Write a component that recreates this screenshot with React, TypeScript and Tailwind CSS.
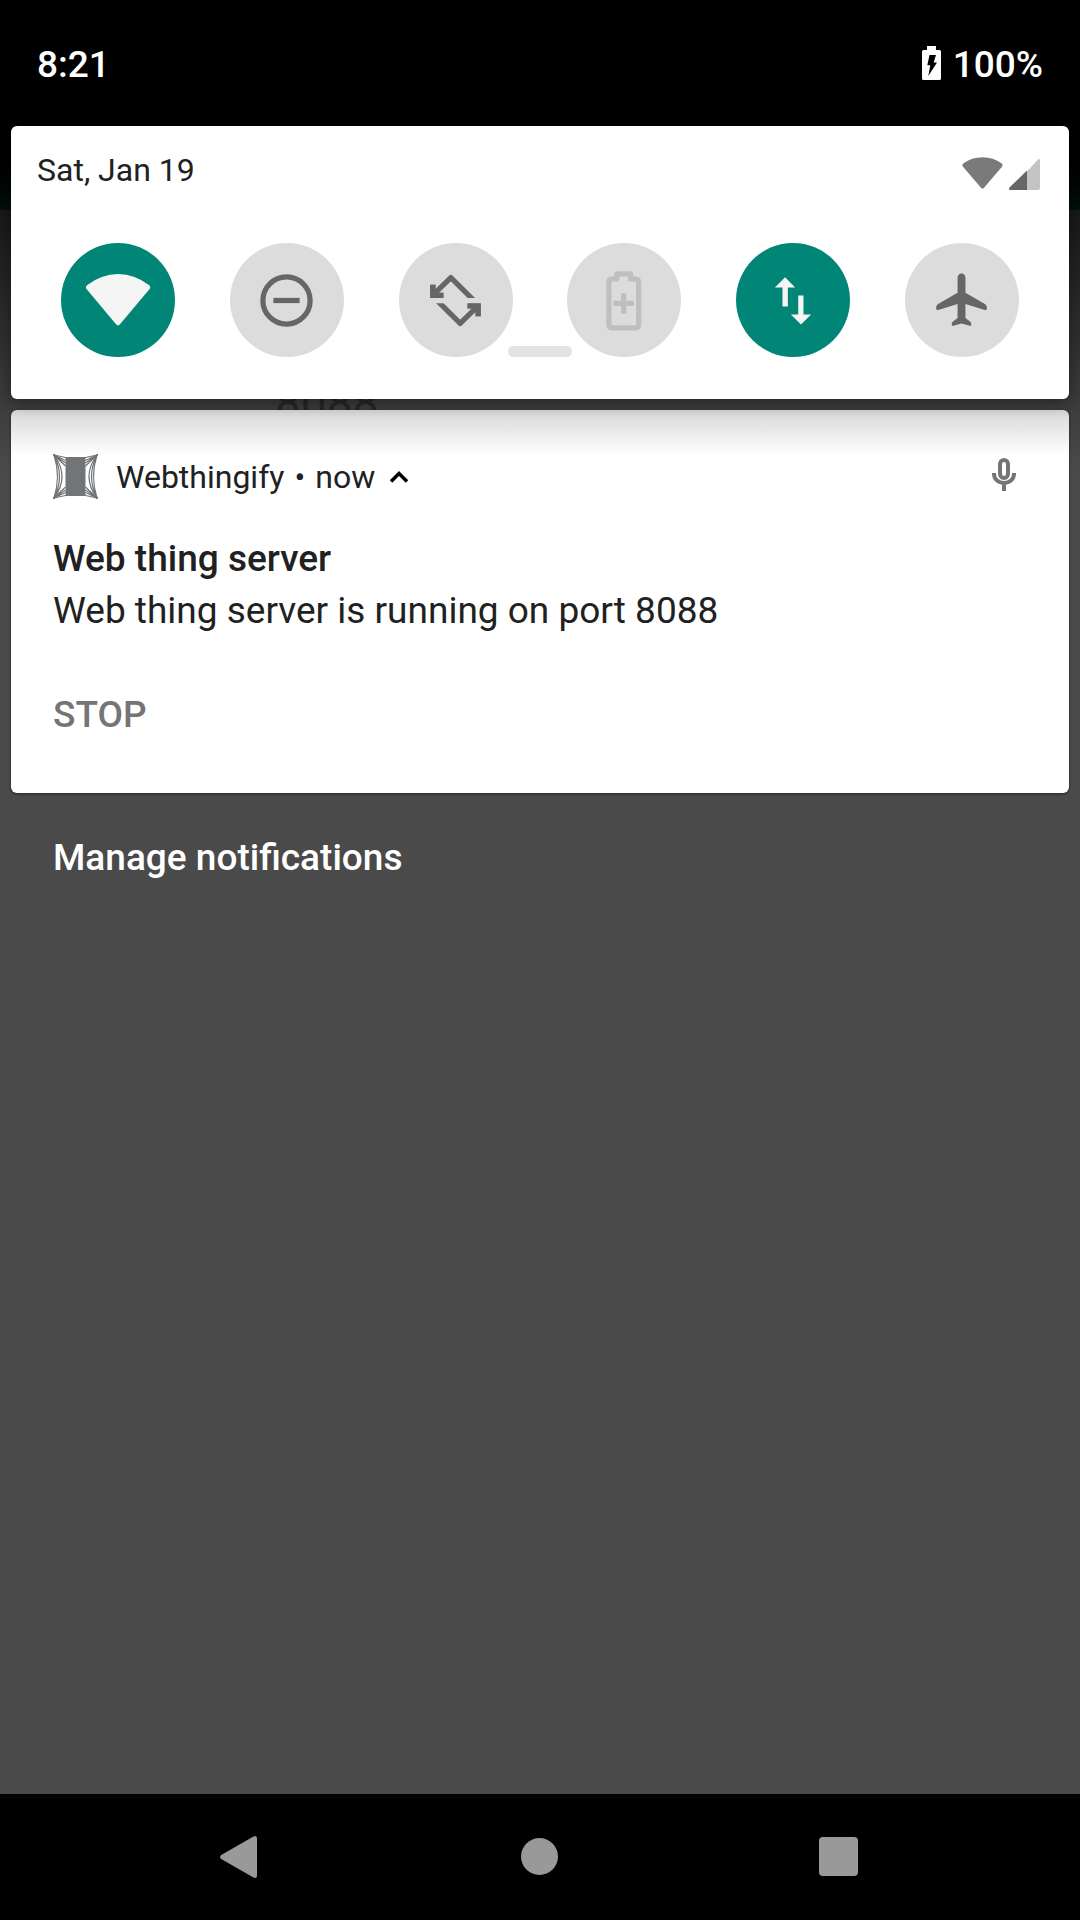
import type { ReactNode } from 'react';

const WIFI_PATH =
  'M25.5 46 Q24 43.7 26.3 42 A49 49 0 0 1 87.9 42 Q90.2 43.7 88.6 46 L59 81.3 Q57 83.6 55 81.3 Z';

const Wifi = () => (
  <svg viewBox="0 0 114 114" className="size-full fill-[#f5f5f5]" aria-hidden="true">
    <path d={WIFI_PATH} />
  </svg>
);

const DoNotDisturb = () => (
  <svg viewBox="0 0 24 24" className="size-[63px] fill-none stroke-[#666666] stroke-2" aria-hidden="true">
    <circle cx="12" cy="12" r="9" />
    <path d="M7 12h10" />
  </svg>
);

const RotateHalf = () => (
  <g clipPath="url(#upper-half)">
    <path d="M3.35 6V10H7.4" strokeWidth="2" />
    <path d="M3.6 9.8 10.22 3.25 19 12" strokeWidth="2" strokeLinejoin="round" />
    <path d="M2.400 11V6H4.400V7.600L5.800 9H7.400V11z" className="fill-[#666666]" stroke="none" />
  </g>
);

const AutoRotate = () => (
  <svg viewBox="0 0 24 24" className="size-[63px] fill-none stroke-[#666666]" aria-hidden="true">
    <clipPath id="upper-half">
      <rect x="0" y="0" width="24" height="11" />
    </clipPath>
    <RotateHalf />
    <g transform="rotate(180 12 12)">
      <RotateHalf />
    </g>
  </svg>
);

const BatterySaver = () => (
  <svg viewBox="0 0 24 24" className="size-[63px] fill-none stroke-[#bfbfbf] stroke-2" aria-hidden="true">
    <path
      d="M9.1 1.900h5.200v1.900h1.700q1.400 0 1.400 1.400v15.800q0 1.400-1.400 1.400H7.450q-1.400 0-1.400-1.400V5.200q0-1.400 1.400-1.400H9.100z"
      strokeLinejoin="round"
    />
    <path d="M7.8 13.1h7.8M11.7 9.2v7.8" />
  </svg>
);

const MobileData = () => (
  <svg viewBox="0 0 24 24" className="size-[63px] fill-[#f5f5f5]" aria-hidden="true">
    <path d="M8.8 3.1 12.65 7.05H9.85v7.25h-2.05V7.05H4.9z" />
    <path d="M14.85 21.1 11 17.3h2.8v-7.2h2v7.2h2.9z" />
  </svg>
);

const Airplane = () => (
  <svg viewBox="0 0 24 24" className="size-[63px] fill-[#666666]" aria-hidden="true">
    <path d="M12 1.7c.83 0 1.5.67 1.5 1.5V9l7.4 4.3q.75.45.75 1.2v.6q0 .7-.8.5L13.5 13.3v5.4l1.5 1.1q.7.5.7 1v.4q0 .6-.6.4L12 20.75l-3.1.85q-.6.2-.6-.4v-.4q0-.5.7-1l1.5-1.1v-5.4l-7.35 2.3q-.8.2-.8-.5v-.6q0-.75.75-1.2L10.5 9V3.2c0-.83.67-1.5 1.5-1.5z" />
  </svg>
);

const tiles: { label: string; state: 'on' | 'off'; disabled?: boolean; icon: ReactNode }[] = [
  { label: 'Wi-Fi', state: 'on', icon: <Wifi /> },
  { label: 'Do not disturb', state: 'off', icon: <DoNotDisturb /> },
  { label: 'Auto-rotate', state: 'off', icon: <AutoRotate /> },
  { label: 'Battery saver', state: 'off', disabled: true, icon: <BatterySaver /> },
  { label: 'Mobile data', state: 'on', icon: <MobileData /> },
  { label: 'Airplane mode', state: 'off', icon: <Airplane /> },
];

const StatusBar = () => (
  <header className="flex h-[126px] items-center justify-between bg-black px-[37px] pt-1 text-[37px] leading-[52px] font-medium text-white">
    <time>8:21</time>
    <div className="flex items-center gap-3">
      <svg viewBox="0 0 19 34" className="mb-1 h-[34px] w-[19px]" aria-hidden="true">
        <path className="fill-white" d="M5 0h9v4h3.500q1.500 0 1.500 1.500v27q0 1.500-1.500 1.500h-16Q0 34 0 32.500v-27Q0 4 1.500 4H5z" />
        <path className="fill-black" d="M7.500 9H14l-2.300 7.500H15L6.300 30 8.300 19.300H5.300z" />
      </svg>
      <span>100%</span>
    </div>
  </header>
);

const QuickSettings = () => (
  <section
    aria-label="Quick settings"
    className="relative z-10 rounded-md bg-white px-[26px] pt-[22px] pb-[42px] shadow-[0_4px_16px_rgba(0,0,0,0.4)]"
  >
    <div className="flex h-11 items-center justify-between">
      <span className="text-[32px] leading-[44px] text-[#212121]">Sat, Jan 19</span>
      <svg viewBox="0 0 84 44" className="h-11 w-[84px]" aria-hidden="true">
        <path
          className="fill-[#7a7a7a]"
          d="M3.800 18.500Q2.600 16.500 4.500 15.200Q12.500 9.200 23.500 9.200Q34.500 9.200 42.500 15.200Q44.400 16.500 43.200 18.500L25 39.700Q23.500 41.500 22 39.700Z"
        />
        <path className="fill-[#c4c4c4]" d="M68 23.500 78.500 12Q81 9.600 81 13v27q0 2-2 2H68z" />
        <path className="fill-[#666666]" d="M68 22.500V42H51.500q-2.500 0-1-2.500z" />
      </svg>
    </div>
    <div className="mt-[51px] flex justify-between px-6">
      {tiles.map((tile) => (
        <button
          key={tile.label}
          type="button"
          aria-label={tile.label}
          aria-pressed={tile.state === 'on'}
          disabled={tile.disabled}
          className={
            tile.state === 'on'
              ? 'flex size-[114px] items-center justify-center rounded-full bg-[#008577]'
              : 'flex size-[114px] items-center justify-center rounded-full bg-[#dcdcdc]'
          }
        >
          {tile.icon}
        </button>
      ))}
    </div>
    <div className="absolute inset-x-0 bottom-[42px] flex justify-center">
      <div className="h-[11px] w-16 rounded-full bg-[#e3e3e3]" />
    </div>
  </section>
);

const WebIcon = () => (
  <svg viewBox="0 0 45 45" className="size-[45px] fill-none stroke-[#727577]" aria-hidden="true">
    <rect x="12.500" y="3" width="20" height="39" className="fill-[#727577]" stroke="none" />
    <g strokeWidth="1.200">
      <path d="M1 1 12.500 3.500h20L44 1M1 44l11.500-2.500h20L44 44" />
      <path d="M1 1Q8 22.500 1 44M1 1Q12 22.500 1 44M1 1Q17 22.500 1 44M44 1Q37 22.500 44 44M44 1Q33 22.500 44 44M44 1Q28 22.500 44 44" />
      <path d="M1 1 12.500 6.500M1 1 12.500 9M1 1 12.500 12M44 1 32.500 6.500M44 1 32.500 9M44 1 32.500 12" />
      <path d="M1 44 12.500 38.500M1 44 12.500 36M1 44 12.500 33M44 44 32.500 38.500M44 44 32.500 36M44 44 32.500 33" />
    </g>
    <path strokeWidth="2" d="m0 0 3 3M45 0l-3 3M0 45l3-3M45 45l-3-3" />
  </svg>
);

const Notification = () => (
  <article className="relative mt-[11px] rounded-md bg-white bg-linear-to-b from-[#d8d8d8] to-white to-[46px] px-[42px] pt-11 pb-[52px] text-[#212121] shadow-[0_1px_3px_rgba(0,0,0,0.5)]">
    <header className="flex h-11 items-center justify-between">
      <div className="flex items-center gap-[18px]">
        <WebIcon />
        <div className="flex items-center pt-0.5 text-[32px] leading-[44px]">
          <span>Webthingify</span>
          <span className="mx-2.5">•</span>
          <span>now</span>
          <button type="button" aria-label="Collapse" className="ml-3.5">
            <svg viewBox="0 0 20 20" className="size-5 fill-none stroke-black stroke-[3.5]" aria-hidden="true">
              <path d="m2 14.500 8-8 8 8" />
            </svg>
          </button>
        </div>
      </div>
      <svg viewBox="0 0 44 44" className="size-11 fill-none stroke-[#757575] stroke-[4]" aria-label="Microphone in use">
        <rect x="17" y="6" width="8" height="18" rx="4" />
        <path d="M11 19v1a10 9 0 0 0 20 0v-1M21 29v8" />
      </svg>
    </header>
    <h2 className="mt-[35px] text-[37px] leading-[52px] font-medium">Web thing server</h2>
    <p className="text-[37px] leading-[52px]">Web thing server is running on port 8088</p>
    <button type="button" className="mt-[52px] block text-[37px] leading-[52px] font-medium text-[#757575]">
      STOP
    </button>
  </article>
);

const NavigationBar = () => (
  <nav className="flex h-[126px] items-center justify-between bg-black px-[219px]">
    <button type="button" aria-label="Back">
      <svg viewBox="0 0 42 42" className="size-[42px] fill-[#999999]" aria-hidden="true">
        <path d="M2.200 19 34.500.4Q38-1 38 2.500v37q0 3.500-3.500 2.100L2.200 23Q0 21 2.200 19z" />
      </svg>
    </button>
    <button type="button" aria-label="Home">
      <svg viewBox="0 0 42 42" className="size-[42px] fill-[#999999]" aria-hidden="true">
        <circle cx="20.500" cy="20.500" r="18.500" />
      </svg>
    </button>
    <button type="button" aria-label="Recent apps">
      <svg viewBox="0 0 42 42" className="size-[42px] fill-[#999999]" aria-hidden="true">
        <rect x="0" y="1" width="39" height="39" rx="4" />
      </svg>
    </button>
  </nav>
);

export default function App() {
  return (
    <div className="flex min-h-screen flex-col bg-[#4a4a4a] font-['Roboto',sans-serif]">
      <StatusBar />
      <main className="relative flex-1">
        <div aria-hidden="true" className="absolute inset-x-0 top-0">
          <div className="h-[84px] bg-linear-to-b from-black to-[#00100c]" />
          <div className="h-[260px] bg-linear-to-b from-[#181818] to-[#4a4a4a]" />
        </div>
        <span aria-hidden="true" className="absolute top-[249px] left-[275px] text-[46px] leading-[56px] text-[#262626]">
          8088
        </span>
        <div className="relative px-[11px]">
          <QuickSettings />
          <Notification />
          <button type="button" className="mt-[39px] ml-[42px] block text-[37px] leading-[52px] font-medium text-white">
            Manage notifications
          </button>
        </div>
      </main>
      <NavigationBar />
    </div>
  );
}
